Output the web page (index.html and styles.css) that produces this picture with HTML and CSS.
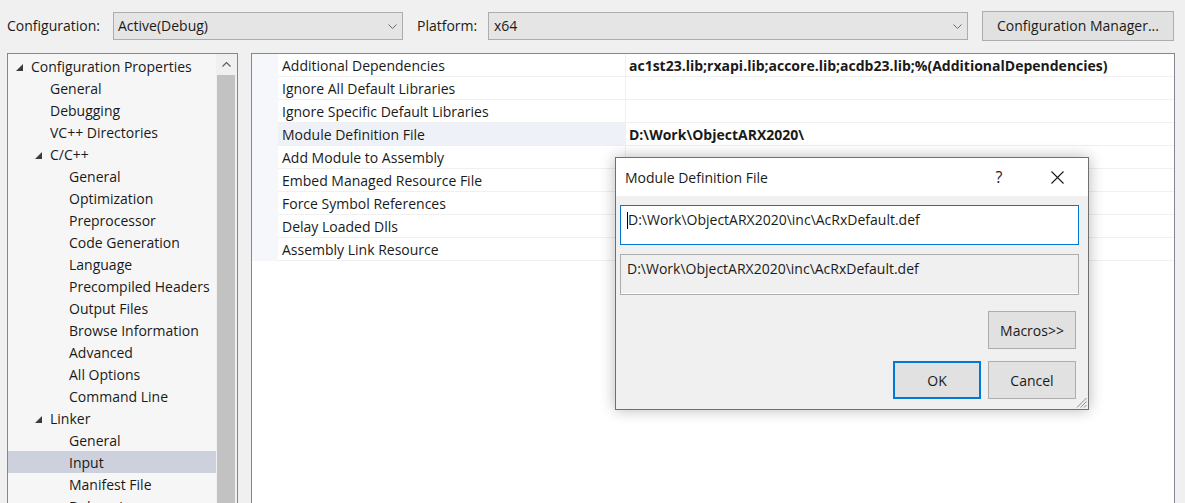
FILE: index.html
```html
<!DOCTYPE html>
<html>
<head>
<meta charset="utf-8">
<title>Property Pages</title>
<link rel="stylesheet" href="styles.css">
</head>
<body>
<div class="toolbar">
  <span class="lbl lbl-config">Configuration:</span>
  <div class="combo combo-config">
    <span>Active(Debug)</span>
    <svg class="chev" width="9" height="5" viewBox="0 0 9 5"><path d="M0.5 0.5 L4.5 4.5 L8.5 0.5" fill="none" stroke="#6a6a6a" stroke-width="1"/></svg>
  </div>
  <span class="lbl lbl-platform">Platform:</span>
  <div class="combo combo-platform">
    <span>x64</span>
    <svg class="chev" width="9" height="5" viewBox="0 0 9 5"><path d="M0.5 0.5 L4.5 4.5 L8.5 0.5" fill="none" stroke="#6a6a6a" stroke-width="1"/></svg>
  </div>
  <button class="btn btn-cfgmgr">Configuration Manager...</button>
</div>

<div class="main">
  <div class="tree">
    <div class="tree-items">
      <div class="node lvl0"><span class="exp"><svg width="7" height="7" viewBox="0 0 7 7"><polygon points="7,0 7,7 0,7" fill="#3c3c3c"/></svg></span>Configuration Properties</div>
      <div class="node lvl1"><span class="exp"></span>General</div>
      <div class="node lvl1"><span class="exp"></span>Debugging</div>
      <div class="node lvl1"><span class="exp"></span>VC++ Directories</div>
      <div class="node lvl1"><span class="exp"><svg width="7" height="7" viewBox="0 0 7 7"><polygon points="7,0 7,7 0,7" fill="#3c3c3c"/></svg></span>C/C++</div>
      <div class="node lvl2"><span class="exp"></span>General</div>
      <div class="node lvl2"><span class="exp"></span>Optimization</div>
      <div class="node lvl2"><span class="exp"></span>Preprocessor</div>
      <div class="node lvl2"><span class="exp"></span>Code Generation</div>
      <div class="node lvl2"><span class="exp"></span>Language</div>
      <div class="node lvl2"><span class="exp"></span>Precompiled Headers</div>
      <div class="node lvl2"><span class="exp"></span>Output Files</div>
      <div class="node lvl2"><span class="exp"></span>Browse Information</div>
      <div class="node lvl2"><span class="exp"></span>Advanced</div>
      <div class="node lvl2"><span class="exp"></span>All Options</div>
      <div class="node lvl2"><span class="exp"></span>Command Line</div>
      <div class="node lvl1"><span class="exp"><svg width="7" height="7" viewBox="0 0 7 7"><polygon points="7,0 7,7 0,7" fill="#3c3c3c"/></svg></span>Linker</div>
      <div class="node lvl2"><span class="exp"></span>General</div>
      <div class="node lvl2 sel"><span class="exp"></span>Input</div>
      <div class="node lvl2"><span class="exp"></span>Manifest File</div>
      <div class="node lvl2"><span class="exp"></span>Debugging</div>
    </div>
    <div class="vscroll">
      <div class="sarrow"><svg width="9" height="5" viewBox="0 0 9 5"><path d="M0.5 4.5 L4.5 0.5 L8.5 4.5" fill="none" stroke="#606060" stroke-width="1.2"/></svg></div>
      <div class="thumb"></div>
    </div>
  </div>

  <div class="grid">
    <div class="prow"><div class="gutter"></div><div class="pname">Additional Dependencies</div><div class="pval">ac1st23.lib;rxapi.lib;accore.lib;acdb23.lib;%(AdditionalDependencies)</div></div>
    <div class="prow"><div class="gutter"></div><div class="pname">Ignore All Default Libraries</div><div class="pval"></div></div>
    <div class="prow"><div class="gutter"></div><div class="pname">Ignore Specific Default Libraries</div><div class="pval"></div></div>
    <div class="prow"><div class="gutter"></div><div class="pname hl">Module Definition File</div><div class="pval">D:\Work\ObjectARX2020\</div></div>
    <div class="prow"><div class="gutter"></div><div class="pname">Add Module to Assembly</div><div class="pval"></div></div>
    <div class="prow"><div class="gutter"></div><div class="pname">Embed Managed Resource File</div><div class="pval"></div></div>
    <div class="prow"><div class="gutter"></div><div class="pname">Force Symbol References</div><div class="pval"></div></div>
    <div class="prow"><div class="gutter"></div><div class="pname">Delay Loaded Dlls</div><div class="pval"></div></div>
    <div class="prow"><div class="gutter"></div><div class="pname">Assembly Link Resource</div><div class="pval"></div></div>
  </div>
</div>

<div class="dialog">
  <div class="dlg-title">
    <span class="dlg-text">Module Definition File</span>
    <span class="dlg-help">?</span>
    <span class="dlg-close"><svg width="13" height="13" viewBox="0 0 13 13"><path d="M0.5 0.5 L12.5 12.5 M12.5 0.5 L0.5 12.5" stroke="#1a1a1a" stroke-width="1.1" fill="none"/></svg></span>
  </div>
  <div class="dlg-body">
    <div class="edit"><span class="caret"></span>D:\Work\ObjectARX2020\inc\AcRxDefault.def</div>
    <div class="preview">D:\Work\ObjectARX2020\inc\AcRxDefault.def</div>
    <div class="btnrow row-macros"><button class="btn dbtn">Macros&gt;&gt;</button></div>
    <div class="btnrow row-ok"><button class="btn dbtn default">OK</button><button class="btn dbtn">Cancel</button></div>
  </div>
  <svg class="grip" width="11" height="11" viewBox="0 0 11 11"><path d="M10.5 1 L1 10.5 M10.5 4.5 L4.5 10.5 M10.5 8 L8 10.5" stroke="#8a8a8a" stroke-width="1" fill="none"/></svg>
</div>
</body>
</html>
```

FILE: styles.css
```css
* { box-sizing: border-box; }

html, body {
  margin: 0;
  padding: 0;
}

body {
  width: 1185px;
  height: 503px;
  overflow: hidden;
  position: relative;
  background: #f0f0f0;
  font-family: "Open Sans", "Noto Sans", sans-serif;
  font-size: 14px;
  color: #1a1a1a;
}

/* ---------- top toolbar ---------- */
.toolbar {
  display: flex;
  align-items: center;
  height: 41px;
  padding: 11px 0 0 7px;
}

.lbl {
  white-space: nowrap;
  padding-bottom: 2px;
}
.lbl-config { width: 106px; }
.lbl-platform { width: 71px; margin-left: 14px; }

.combo {
  height: 28px;
  display: flex;
  align-items: center;
  justify-content: space-between;
  padding: 0 5px 2px 4px;
  background: #e5e5e5;
  border: 1px solid #acacac;
}
.combo .chev { margin-top: 2px; }
.combo-config { width: 290px; }
.combo-platform { width: 480px; padding-left: 5px; }

.btn {
  font: inherit;
  color: #1a1a1a;
  background: #e1e1e1;
  border: 1px solid #adadad;
  padding: 0;
  margin: 0;
}

.btn-cfgmgr {
  width: 192px;
  height: 30px;
  margin-left: 14px;
  padding-bottom: 2px;
}

/* ---------- main area ---------- */
.main {
  display: flex;
  gap: 13px;
  margin: 12px 0 0 7px;
  height: 460px;
}

.tree {
  width: 231px;
  flex: none;
  display: flex;
  border: 1px solid #828790;
  background: #f6f6f6;
}

.tree-items {
  width: 208px;
  overflow: hidden;
  padding-top: 1px;
}

.node {
  height: 22px;
  padding-top: 2px;
  line-height: 20px;
  display: flex;
  align-items: center;
  white-space: nowrap;
}
.lvl0 { padding-left: 8px; }
.lvl1 { padding-left: 27px; }
.lvl2 { padding-left: 46px; }
.node.sel { background: #cdd0dd; }

.exp {
  width: 15px;
  flex: none;
  display: flex;
  align-items: center;
}

.vscroll {
  width: 21px;
  flex: none;
  display: flex;
  flex-direction: column;
  background: #f0f0f0;
}
.sarrow {
  height: 21px;
  display: flex;
  align-items: center;
  justify-content: center;
}
.thumb {
  flex: 1;
  background: #c2c2c2;
  margin: 0 2px 0 1px;
}

.grid {
  width: 924px;
  flex: none;
  border: 1px solid #828790;
  background: #ffffff;
}

.prow {
  display: flex;
  height: 23px;
  line-height: 20px;
  white-space: nowrap;
}
.gutter {
  width: 26px;
  flex: none;
  background: #f5f7fa;
}
.pname {
  width: 348px;
  flex: none;
  padding: 2px 0 0 4px;
  border-bottom: 1px solid #f0f0f0;
  border-right: 1px solid #f0f0f0;
}
.pname.hl { background: #eef2f8; }
.pval {
  flex: 1;
  padding: 2px 0 0 3px;
  font-weight: 700;
  border-bottom: 1px solid #f0f0f0;
}

/* ---------- dialog ---------- */
.dialog {
  position: absolute;
  left: 615px;
  top: 157px;
  width: 474px;
  height: 253px;
  border: 1px solid #707070;
  background: #f0f0f0;
  box-shadow: 0 0 14px rgba(0, 0, 0, 0.28);
}

.dlg-title {
  height: 38px;
  display: flex;
  align-items: center;
  padding-left: 9px;
  background: #ffffff;
}
.dlg-text { flex: 1; }
.dlg-help {
  width: 46px;
  text-align: center;
  font-size: 16px;
}
.dlg-close {
  width: 46px;
  margin: 0 8px 0 12px;
  display: flex;
  justify-content: center;
}

.dlg-body {
  padding: 9px 9px 0 4px;
}

.edit {
  height: 40px;
  padding: 3px 6px 0;
  line-height: 22px;
  background: #ffffff;
  border: 1px solid #0078d7;
  white-space: nowrap;
}
.caret {
  display: inline-block;
  width: 1px;
  height: 17px;
  background: #000;
  vertical-align: -4px;
}

.preview {
  height: 41px;
  margin-top: 9px;
  padding: 3px 6px 0;
  line-height: 22px;
  border: 1px solid #adadad;
  box-shadow: inset 0 -1px 0 #ffffff;
  white-space: nowrap;
}

.btnrow {
  display: flex;
  justify-content: flex-end;
  gap: 7px;
  margin-right: 3px;
}
.row-macros { margin-top: 16px; }
.row-ok { margin-top: 12px; }

.dbtn {
  width: 88px;
  height: 38px;
}
.dbtn.default { border: 2px solid #0078d7; }

.grip {
  position: absolute;
  right: 1px;
  bottom: 1px;
}
```
